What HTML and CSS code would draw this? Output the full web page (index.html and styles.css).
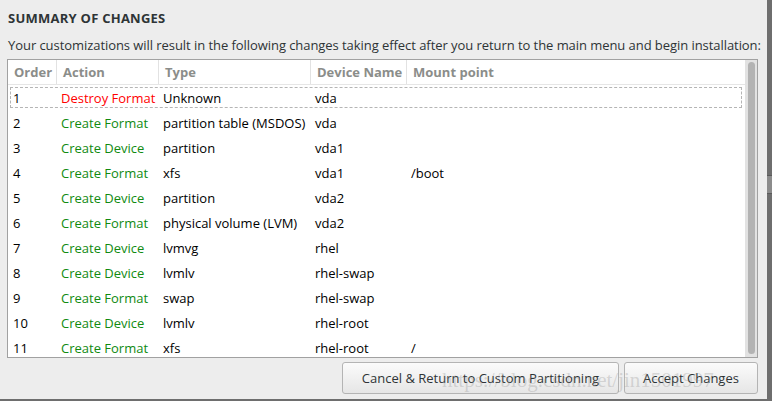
FILE: index.html
```html
<!DOCTYPE html>
<html>
<head>
<meta charset="utf-8">
<link rel="stylesheet" href="styles.css">
</head>
<body>
<div class="screen">
  <div class="top">
    <div class="dialog">
      <h1 class="title">SUMMARY OF CHANGES</h1>
      <p class="subtitle">Your customizations will result in the following changes taking effect after you return to the main menu and begin installation:</p>
      <div class="frame">
        <div class="list">
          <div class="row header">
            <div class="cell">Order</div>
            <div class="cell">Action</div>
            <div class="cell">Type</div>
            <div class="cell">Device Name</div>
            <div class="cell last">Mount point</div>
          </div>
          <div class="rows">
            <div class="row item focus"><div class="cell">1</div><div class="cell destroy">Destroy Format</div><div class="cell">Unknown</div><div class="cell">vda</div><div class="cell"></div></div>
            <div class="row item"><div class="cell">2</div><div class="cell create">Create Format</div><div class="cell">partition table (MSDOS)</div><div class="cell">vda</div><div class="cell"></div></div>
            <div class="row item"><div class="cell">3</div><div class="cell create">Create Device</div><div class="cell">partition</div><div class="cell">vda1</div><div class="cell"></div></div>
            <div class="row item"><div class="cell">4</div><div class="cell create">Create Format</div><div class="cell">xfs</div><div class="cell">vda1</div><div class="cell">/boot</div></div>
            <div class="row item"><div class="cell">5</div><div class="cell create">Create Device</div><div class="cell">partition</div><div class="cell">vda2</div><div class="cell"></div></div>
            <div class="row item"><div class="cell">6</div><div class="cell create">Create Format</div><div class="cell">physical volume (LVM)</div><div class="cell">vda2</div><div class="cell"></div></div>
            <div class="row item"><div class="cell">7</div><div class="cell create">Create Device</div><div class="cell">lvmvg</div><div class="cell">rhel</div><div class="cell"></div></div>
            <div class="row item"><div class="cell">8</div><div class="cell create">Create Device</div><div class="cell">lvmlv</div><div class="cell">rhel-swap</div><div class="cell"></div></div>
            <div class="row item"><div class="cell">9</div><div class="cell create">Create Format</div><div class="cell">swap</div><div class="cell">rhel-swap</div><div class="cell"></div></div>
            <div class="row item"><div class="cell">10</div><div class="cell create">Create Device</div><div class="cell">lvmlv</div><div class="cell">rhel-root</div><div class="cell"></div></div>
            <div class="row item"><div class="cell">11</div><div class="cell create">Create Format</div><div class="cell">xfs</div><div class="cell">rhel-root</div><div class="cell">/</div></div>
          </div>
        </div>
        <div class="scrollbar"><div class="slider"></div></div>
      </div>
      <div class="buttons">
        <button class="btn cancel">Cancel &amp; Return to Custom Partitioning</button>
        <button class="btn accept">Accept Changes</button>
        <span class="watermark">https://blog.csdn.net/jin1501997</span>
      </div>
    </div>
    <div class="edge"><div class="edge-gap"></div><div class="edge-block"></div></div>
  </div>
  <div class="bottom-edge"></div>
</div>
</body>
</html>
```

FILE: styles.css
```css
* { box-sizing: border-box; }
html, body { margin: 0; padding: 0; }
body {
  background: #ededed;
  font-family: "Open Sans", "DejaVu Sans", sans-serif;
  font-size: 13px;
  color: #2e3436;
  width: 772px;
  height: 401px;
  overflow: hidden;
}
.screen { display: flex; flex-direction: column; height: 401px; }
.top { display: flex; height: 399px; }
.dialog {
  width: 767px;
  padding: 0 9px 0 7px;
  display: flex;
  flex-direction: column;
}
.edge {
  flex: 1;
  background: #6e6e6e;
  display: flex;
  flex-direction: column;
}
.edge-gap { height: 175px; }
.edge-block { height: 19px; background: #8c8c8c; border-top: 1px solid #5a5a5a; border-bottom: 1px solid #5a5a5a; }
.bottom-edge { height: 2px; background: #6e6e6e; }

.title {
  margin: 0;
  padding: 9px 0 0 1px;
  font-size: 13px;
  font-weight: bold;
  line-height: 18px;
  letter-spacing: 0.25px;
  color: #2e3436;
}
.subtitle {
  margin: 0;
  padding: 9px 0 0 1px;
  line-height: 18px;
  height: 32px;
  white-space: nowrap;
  letter-spacing: -0.06px;
  color: #2e3436;
}
.frame {
  height: 299px;
  border: 1px solid #a1a1a1;
  background: #fff;
  display: flex;
}
.list {
  flex: 1;
  overflow: hidden;
}
.row {
  display: grid;
  grid-template-columns: 49px 102px 152px 96px 1fr;
}
.header {
  height: 25px;
  border-bottom: 1px solid #e6e6e6;
  color: #8b8d8a;
  font-weight: bold;
}
.header .cell {
  padding-left: 6px;
  line-height: 24px;
  border-right: 1px solid #e2e2e2;
}
.header .cell.last { border-right: none; }
.item {
  height: 25px;
  color: #000;
}
.item .cell {
  line-height: 25px;
  padding: 1px 0 0 4px;
  white-space: nowrap;
}
.item .cell:first-child { padding-left: 5px; }
.focus {
  position: relative;
}
.focus::after {
  content: "";
  position: absolute;
  left: 2px;
  right: 3px;
  top: 2px;
  bottom: 2px;
  border: 1px dashed #b5b5b5;
}
.destroy { color: #ff0000; }
.create { color: #108a10; }

.scrollbar {
  width: 12px;
  background: #e2e2e2;
  padding: 2px 2px 2px 3px;
}
.slider {
  height: 292px;
  background: #b3b3b3;
  border-radius: 4px;
}

.buttons {
  position: relative;
  display: flex;
  justify-content: flex-end;
  gap: 5px;
  margin-top: 4px;
}
.btn {
  height: 32px;
  border: 1px solid #b4b4b4;
  border-radius: 3px;
  background: linear-gradient(#fbfbfb, #e6e6e6);
  font-family: inherit;
  font-size: 13px;
  color: #2e3436;
  padding: 0;
}
.cancel { width: 277px; }
.accept { width: 134px; }
.watermark {
  position: absolute;
  left: 435px;
  top: 6px;
  font-family: "Liberation Serif", serif;
  font-size: 21px;
  color: rgba(140, 140, 140, 0.3);
  white-space: nowrap;
  pointer-events: none;
}
```
